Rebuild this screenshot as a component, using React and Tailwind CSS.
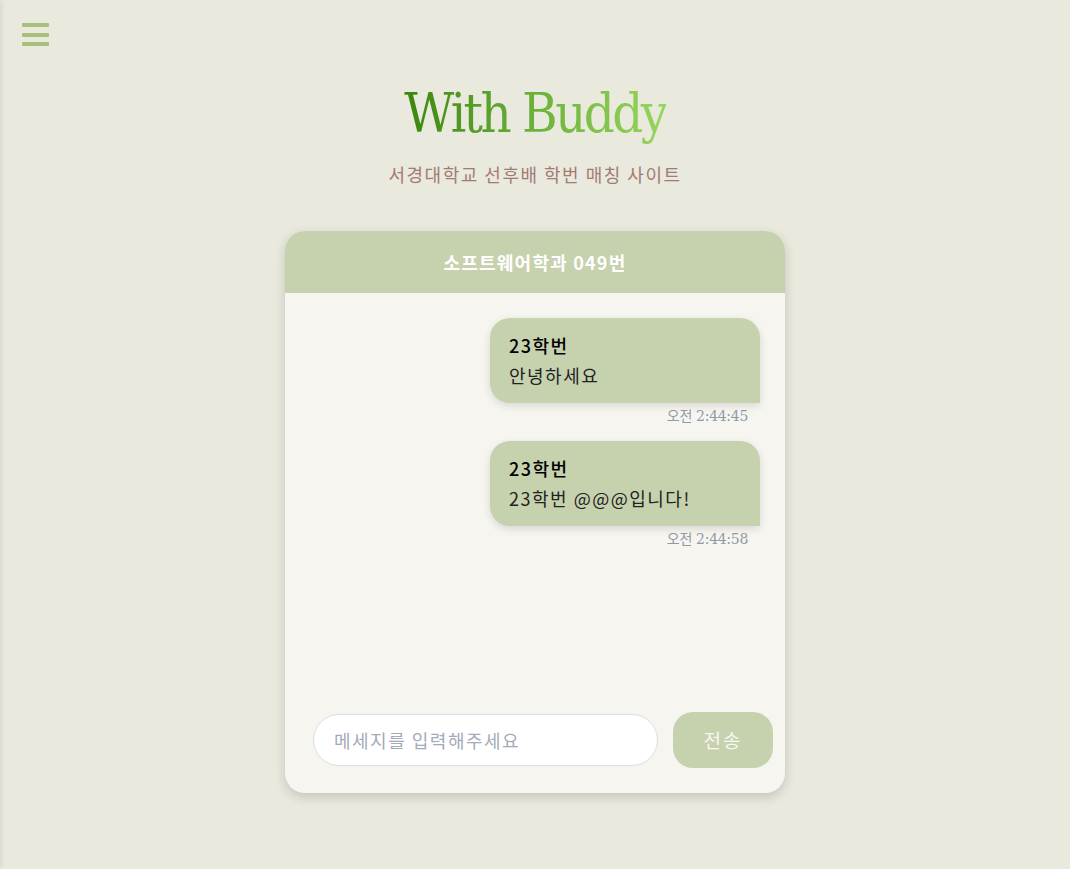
import React, { useState } from 'react'

const messages = [
  { id: 1, sender: '23학번', text: '안녕하세요', time: '오전 2:44:45' },
  { id: 2, sender: '23학번', text: '23학번 @@@입니다!', time: '오전 2:44:58' },
]

const Bubble = ({ msg }) => (
  <div className="flex flex-col items-end">
    <div className="w-[270px] rounded-[20px] rounded-br-none bg-[#c6d1ae] pl-[19px] pr-[18px] pt-[13px] pb-[14px] shadow-[0_3px_8px_rgba(0,0,0,0.12)]">
      <div className="text-[18px] leading-[28px] font-medium tracking-[1.5px] text-black">{msg.sender}</div>
      <div className="mt-[2px] text-[18px] leading-[28px] tracking-[1.5px] text-[#222]">{msg.text}</div>
    </div>
    <div className="mt-[3px] mr-[12px] text-[14px] leading-[20px] text-[#8f9aa6] font-['DejaVu_Serif','Noto_Sans_CJK_KR',serif] tracking-[-0.3px]">
      {msg.time}
    </div>
  </div>
)

export default function App() {
  const [text, setText] = useState('')

  return (
    <div className="relative min-h-[869px] overflow-hidden bg-[#eae9de] font-['Noto_Sans_CJK_KR','Noto_Sans',sans-serif]">
      {/* hidden side menu, only its shadow peeks in */}
      <div className="absolute left-[-260px] top-0 h-full w-[260px] shadow-[0_0_6px_rgba(0,0,0,0.12)]" />

      <div className="px-[22px] pt-[23px]">
        <button type="button" className="flex w-[27px] flex-col gap-[5.5px]">
          <span className="block h-[4px] w-[27px] rounded-[1px] bg-[#a8bf7d]" />
          <span className="block h-[4px] w-[27px] rounded-[1px] bg-[#a8bf7d]" />
          <span className="block h-[4px] w-[27px] rounded-[1px] bg-[#a8bf7d]" />
        </button>
      </div>

      <div className="mt-[36px] flex flex-col items-center">
        <h1 className="bg-gradient-to-r from-[#3b860c] via-[#6cb13a] to-[#97d65c] bg-clip-text text-transparent text-[54px] leading-[64px] font-normal font-stretch-condensed tracking-[-2.6px] font-['DejaVu_Serif',serif]">
          With Buddy
        </h1>
        <p className="mt-[15px] text-[18px] leading-[26px] tracking-[1.5px] text-[#a27b72]">
          서경대학교 선후배 학번 매칭 사이트
        </p>
      </div>

      <div className="mx-auto mt-[44px] flex h-[562px] w-[500px] flex-col overflow-hidden rounded-[20px] bg-[#f6f5f0] shadow-[0_4px_12px_rgba(0,0,0,0.16)]">
        <div className="flex h-[62px] items-center justify-center bg-[#c6d1ae]">
          <span className="text-[18px] font-bold tracking-[1.2px] text-white">소프트웨어학과 049번</span>
        </div>

        <div className="flex flex-1 flex-col gap-[15px] px-[25px] pt-[25px]">
          {messages.map((m) => (
            <Bubble key={m.id} msg={m} />
          ))}
        </div>

        <div className="mb-[25px] flex h-[56px] items-center gap-[15px] pl-[28px]">
          <input
            type="text"
            value={text}
            onChange={(e) => setText(e.target.value)}
            placeholder="메세지를 입력해주세요"
            className="h-[52px] w-[345px] rounded-[26px] border border-[#dcdcdc] bg-white px-[20px] text-[18px] tracking-[1.5px] text-[#333] placeholder:text-[#a4aab9] focus:outline-none"
          />
          <button
            type="button"
            className="h-[56px] w-[100px] rounded-[20px] bg-[#c6d1ae] text-[19px] tracking-[2px] text-[#f7f7f2]"
          >
            전송
          </button>
        </div>
      </div>
    </div>
  )
}
